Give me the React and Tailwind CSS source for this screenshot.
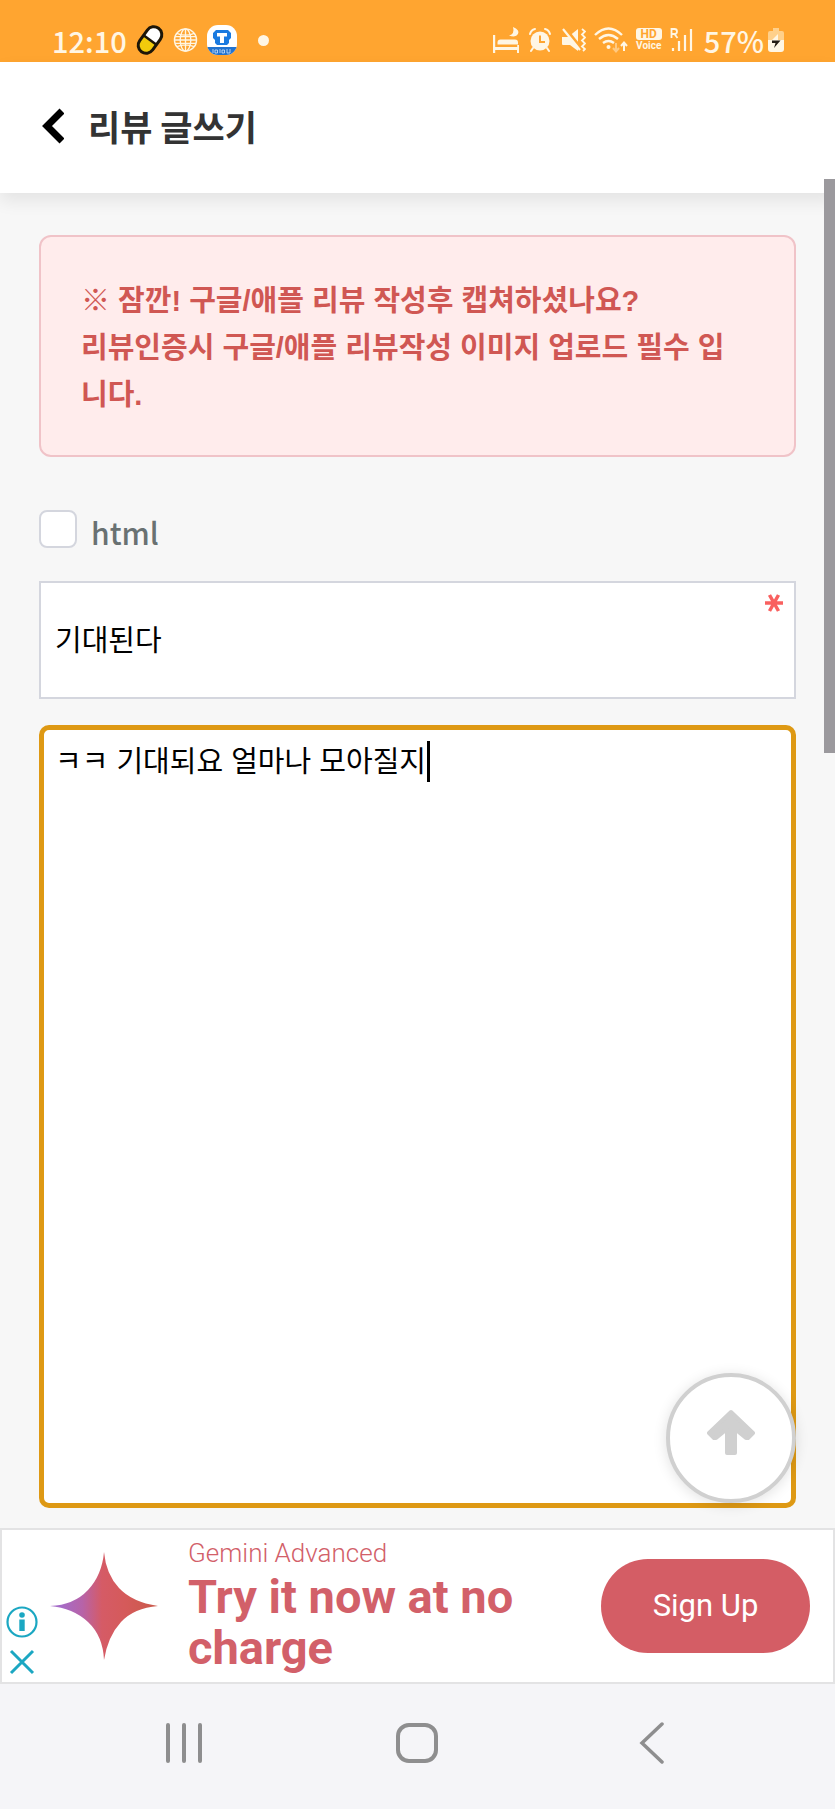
import { useState } from "react";

const korean = "font-['Noto_Sans_CJK_KR',sans-serif]";

function StatusBar() {
  return (
    <div className={`flex h-[62px] items-center justify-between bg-[#ffa530] pt-[18px] pr-[51px] pl-[52px] text-[#fff6e4] ${korean}`}>
      <div className="flex items-center gap-[9px]">
        <span className="text-[29px] leading-8 font-medium">12:10</span>

        {/* Pill */}
        <svg className="h-8 w-7" viewBox="0 0 28 32">
          <g transform="rotate(36 14 16)">
            <rect x="6" y="1.5" width="16" height="29" rx="8" fill="#fff" />
            <path d="M6 16h16v6.5a8 8 0 0 1-16 0z" fill="#f2cb0c" />
            <rect x="6" y="1.5" width="16" height="29" rx="8" fill="none" stroke="#1d1608" strokeWidth="3" />
            <path d="M6 16h16" stroke="#1d1608" strokeWidth="2.5" />
          </g>
        </svg>

        {/* Globe */}
        <svg className="h-[26px] w-[25px]" viewBox="0 0 26 26" fill="none" stroke="currentColor" strokeWidth="1.4">
          <circle cx="13" cy="13" r="11.5" />
          <ellipse cx="13" cy="13" rx="5.5" ry="11.5" />
          <path d="M13 1.5v23M1.5 13h23M4 6q9 4 18 0M4 20q9-4 18 0M2 9.5h22M2 16.5h22" />
        </svg>

        {/* App */}
        <svg className="h-8 w-[30px]" viewBox="0 0 30 32">
          <clipPath id="app">
            <rect x="0" y="1" width="30" height="30" rx="11" />
          </clipPath>
          <g clipPath="url(#app)">
            <rect width="30" height="32" fill="#fff" />
            <rect y="23" width="30" height="9" fill="#2273cf" />
            <path d="M9 6h12l3 3v5l-2 2v3l-2 2H10l-2-2v-3l-2-2V9z" fill="#1a7ae0" />
            <path d="M10 9h10v3.5h-3V19h-4v-6.5h-3z" fill="#fff" />
            <path d="M6 25v4M8 26h2.5v3H8zM13 25v4M15 26h2.5v3H15zM20 25v4h3v-4" fill="none" stroke="#cfe4fb" strokeWidth=".8" />
          </g>
        </svg>

        <span className="ml-3 size-[11px] rounded-full bg-current" />
      </div>

      <div className="flex items-center gap-2">
        {/* Bed */}
        <svg className="h-7 w-7" viewBox="0 0 28 28" fill="currentColor">
          <path d="M0 9h2.2v12h22v-2H26v8h-2v-3H2.2v3H0z" />
          <path d="M4.500 18.500v-2q0-3 3-3H22q3 0 3 3v2z" />
          <path d="M20 1q7 3 5 7t-9 1.500q6-1.500 4-8.500z" />
        </svg>

        {/* Alarm */}
        <svg className="h-[26px] w-[25px]" viewBox="0 0 25 26" fill="none" stroke="currentColor" strokeWidth="2">
          <circle cx="11" cy="14" r="9.5" fill="currentColor" stroke="none" />
          <path d="M1 7q1-4 5-5M16 2q4 1 5 5M4 21l-2 3M18 21l2 3" strokeLinecap="round" />
          <path d="M11 8.5V15h5" stroke="#ffa530" />
        </svg>

        {/* Muted with vibration */}
        <svg className="h-[26px] w-6" viewBox="0 0 24 26">
          <path d="M0 10h6l10-8v22l-8-6H1q-1 0-1-1z" fill="currentColor" />
          <path d="M3 1l16 20" stroke="#ffa530" strokeWidth="3" />
          <path d="M1 2l17 21" stroke="currentColor" strokeWidth="2.2" />
          <path d="M20 2l3 2.500-3 3 3 3-3 3 3 3-3 3 3 2.500-2 2" fill="none" stroke="currentColor" strokeWidth="1.8" />
        </svg>

        {/* Wifi */}
        <svg className="h-7 w-[34px]" viewBox="0 0 34 28" fill="none" stroke="currentColor" strokeWidth="2.4">
          <path d="M1 9q13.500-13 27 0M5 13q9.500-8 19 0M9 17q5.500-4 11 0" />
          <circle cx="14.5" cy="21" r="2" fill="currentColor" stroke="none" />
          <path d="M22 17v8M19 22l3 3.500 3-3.500" strokeWidth="2" opacity=".45" />
          <path d="M30 25v-8M27 20l3-3.500 3 3.500" strokeWidth="2" />
        </svg>

        <div className="flex w-[26px] flex-col items-center font-['Roboto',sans-serif] font-bold">
          <span className="w-full rounded-[3px] bg-current text-center text-[12px] leading-3">
            <span className="text-[#ffa530]">HD</span>
          </span>
          <span className="text-[10px] leading-3">Voice</span>
        </div>

        {/* Signal */}
        <svg className="h-7 w-[26px]" viewBox="0 0 26 28" fill="none" stroke="currentColor" strokeWidth="2.2">
          <path d="M1.500 12V3h3q2.500 0 2.500 2.500T4.500 8h-3M4.500 8l3 4" strokeWidth="1.8" />
          <path d="M3 22v3M9 15v10M15 9v16M21 3v22" />
        </svg>

        <div className="flex items-center gap-1">
          <span className="text-[29px] leading-8 font-medium">57%</span>
          <svg className="h-[26px] w-4" viewBox="0 0 16 26">
            <path d="M5 1h6v3h3q2 0 2 2v8H0V6q0-2 2-2h3z" fill="#ffd08b" />
            <path d="M0 13h16v9q0 3-3 3H3q-3 0-3-3z" fill="currentColor" />
            <path d="M10 7l-6 6h6z" fill="#fff6e4" />
            <path d="M4 13.500h8.500L6 21l1.500-5H4z" fill="#241c14" />
          </svg>
        </div>
      </div>
    </div>
  );
}

function AdBanner() {
  return (
    <aside className="flex h-[156px] items-center border-2 border-[#e3e3e4] bg-white pr-[23px] font-['Roboto',sans-serif]">
      <div className="flex w-9 flex-col items-end gap-2 self-end pb-1">
        <button aria-label="Ad info">
          <svg className="size-8" viewBox="0 0 32 32" fill="#1ba7c2">
            <circle cx="16" cy="16" r="14.5" fill="none" stroke="#1ba7c2" strokeWidth="2.2" />
            <circle cx="16" cy="9" r="2.8" />
            <path d="M13.300 13.500h5.400V25h-5.400z" />
          </svg>
        </button>
        <button aria-label="Close ad">
          <svg className="size-8" viewBox="0 0 32 32" stroke="#1ba7c2" strokeWidth="3">
            <path d="M5 5l22 22M27 5L5 27" />
          </svg>
        </button>
      </div>

      <svg className="mr-[30px] ml-3 size-[108px] shrink-0" viewBox="0 0 108 108">
        <defs>
          <linearGradient id="spark">
            <stop offset="0.1" stopColor="#a56cc8" />
            <stop offset="0.3" stopColor="#b763a8" />
            <stop offset="0.48" stopColor="#d55b66" />
            <stop offset="0.7" stopColor="#d55a5a" />
            <stop offset="1" stopColor="#c95a4a" />
          </linearGradient>
        </defs>
        <path d="M54 0Q56 22 69 36T108 54Q84 56 71 70T54 108Q53 84 38 70T0 54Q24 53 38 38T54 0z" fill="url(#spark)" />
      </svg>

      <div className="flex-1 text-[#d26069]">
        <p className="mb-1 text-[26px] leading-7 font-light">Gemini Advanced</p>
        <p className="max-w-[360px] text-[47px] leading-[51px] font-bold">Try it now at no charge</p>
      </div>

      <button className="h-[94px] w-[209px] shrink-0 rounded-full bg-[#d45d65] text-[31px] text-white">Sign Up</button>
    </aside>
  );
}

function NavBar() {
  return (
    <nav className="flex h-[125px] justify-center bg-[#f5f5f8] pb-2 text-[#8e8e8f]">
      <button aria-label="Recent apps" className="flex w-[28%] items-center justify-center">
        <svg className="size-[42px]" viewBox="0 0 42 42" stroke="currentColor" strokeWidth="4" strokeLinecap="round">
          <path d="M5 3v36M21 3v36M37 3v36" />
        </svg>
      </button>
      <button aria-label="Home" className="flex w-[28%] items-center justify-center">
        <svg className="size-[42px]" viewBox="0 0 42 42" fill="none" stroke="currentColor" strokeWidth="4">
          <rect x="2" y="3" width="38" height="36" rx="11" />
        </svg>
      </button>
      <button aria-label="Back" className="flex w-[28%] items-center justify-center">
        <svg className="size-[42px]" viewBox="0 0 42 42" fill="none" stroke="currentColor" strokeWidth="3.5" strokeLinecap="round">
          <path d="M32 2L12 21l20 19" />
        </svg>
      </button>
    </nav>
  );
}

export default function App() {
  const [html, setHtml] = useState(false);
  const [title, setTitle] = useState("기대된다");
  const [content, setContent] = useState("ㅋㅋ 기대되요 얼마나 모아질지");

  return (
    <div className={`flex min-h-screen flex-col bg-[#f7f7f7] ${korean}`}>
      <StatusBar />

      <div className="relative flex flex-1 flex-col">
        <header className="flex h-[131px] items-center gap-6 bg-white pb-1 pl-[42px] shadow-[0_8px_16px_rgba(0,0,0,0.08)]">
          <button aria-label="뒤로">
            <svg className="h-9 w-[22px]" viewBox="0 0 22 36" fill="none" stroke="#000" strokeWidth="7">
              <path d="M20 3L5 18l15 15" />
            </svg>
          </button>
          <h1 className="text-[35px] leading-[44px] font-bold text-[#333]">리뷰 글쓰기</h1>
        </header>

        <main className="relative flex flex-1 flex-col px-[39px] pt-[42px] pb-5">
          <div className="rounded-xl border-2 border-[#f0c3c8] bg-[#ffecec] pt-[41px] pr-[60px] pb-9 pl-10 font-['Liberation_Sans','Noto_Sans_CJK_KR',sans-serif] text-[29px] leading-[47px] font-bold text-[#d05753]">
            ※ 잠깐! 구글/애플 리뷰 작성후 캡쳐하셨나요?
            <br />
            리뷰인증시 구글/애플 리뷰작성 이미지 업로드 필수 입니다.
          </div>

          <label className="mt-[50px] flex items-center gap-[14px] text-[30px] leading-[38px] font-medium text-[#697172]">
            <input
              type="checkbox"
              checked={html}
              onChange={(e) => setHtml(e.target.checked)}
              className="size-[38px] appearance-none rounded-lg border-2 border-[#d4d6de] bg-white checked:bg-[#de9914]"
            />
            <span className="pt-1.5">html</span>
          </label>

          <div className="relative mt-[30px]">
            <input
              type="text"
              aria-label="제목"
              value={title}
              onChange={(e) => setTitle(e.target.value)}
              className="block h-[118px] w-full border-2 border-[#d4d6de] bg-white px-[14px] pb-1 font-['Liberation_Sans','Noto_Sans_CJK_KR',sans-serif] text-[29px] text-black outline-none"
            />
            {/* Required mark */}
            <svg className="absolute top-3 right-3 size-5" viewBox="0 0 20 20" fill="none" stroke="#f9605f" strokeWidth="3.5">
              <path d="M1 10h18M5.500 2l9 16M14.500 2l-9 16" />
            </svg>
          </div>

          <div className="relative mt-[26px] flex flex-1">
            <textarea
              aria-label="내용"
              value={content}
              onChange={(e) => setContent(e.target.value)}
              className="w-full resize-none rounded-[10px] border-[5px] border-[#de9914] bg-white px-[11px] py-[13px] font-['Liberation_Sans','Noto_Sans_CJK_KR',sans-serif] text-[29px] leading-[38px] text-black outline-none"
            />
            <span className="absolute top-4 left-[388px] h-[41px] w-[3px] bg-black" />
          </div>

          <button
            aria-label="맨 위로"
            className="absolute right-[39px] bottom-[25px] flex size-[130px] items-center justify-center rounded-full border-4 border-[#d0d0d0] bg-white shadow-[0_2px_14px_rgba(0,0,0,0.12)]"
          >
            <svg className="mb-2.5 size-12" viewBox="0 0 48 48" fill="#d0d0d0" stroke="#d0d0d0" strokeWidth="4" strokeLinejoin="round">
              <path d="M24 3L2 24l5 5h2l11-9v24h8V20l11 9h2l5-5z" />
            </svg>
          </button>
        </main>

        {/* Scroll thumb */}
        <div className="absolute top-[117px] right-0 h-[574px] w-[11px] bg-[#9b999d]" />
      </div>

      <AdBanner />
      <NavBar />
    </div>
  );
}
